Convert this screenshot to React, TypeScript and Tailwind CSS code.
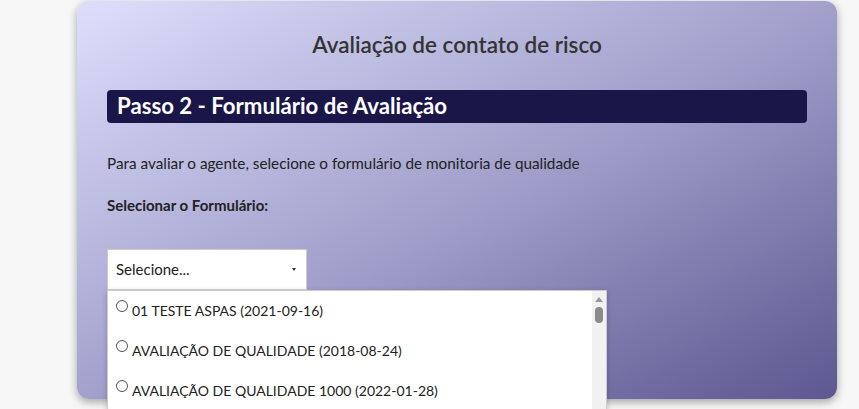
import React from 'react';

const options = [
  '01 TESTE ASPAS (2021-09-16)',
  'AVALIAÇÃO DE QUALIDADE (2018-08-24)',
  'AVALIAÇÃO DE QUALIDADE 1000 (2022-01-28)',
];

const App: React.FC = () => {
  return (
    <div className="h-[409px] overflow-hidden bg-[#f7f7f8] pt-px font-['Lato',sans-serif]">
      <div className="ml-[77px] w-[760px] h-[398px] rounded-[12px] bg-gradient-to-br from-[#dedefc] via-[#a3a1cc] to-[#5d5890] shadow-[0_3px_8px_rgba(0,0,0,0.35)] px-[30px] pt-[30px] relative">
        <h1 className="text-center text-[22.5px] font-semibold text-[#333] leading-[28px]">Avaliação de contato de risco</h1>

        <div className="mt-[31px] h-[33px] rounded-[4px] bg-[#1a1648] px-[10px] flex items-center">
          <h2 className="text-white text-[22.2px] font-bold leading-none">Passo 2 - Formulário de Avaliação</h2>
        </div>

        <p className="mt-[30px] text-[15.3px] text-[#222] leading-[20px]">
          Para avaliar o agente, selecione o formulário de monitoria de qualidade
        </p>
        <p className="mt-[22px] text-[15px] font-bold text-[#222] leading-[20px]">Selecionar o Formulário:</p>

        <div className="relative mt-[34px] w-[200px]">
          <div className="h-[41px] bg-white border border-[#ccc] flex items-center justify-between pl-[8px] pr-[10px] text-[15px] text-[#222]">
            <span>Selecione...</span>
            <span className="w-0 h-0 border-l-[2px] border-r-[2px] border-t-[3px] border-l-transparent border-r-transparent border-t-[#333]" />
          </div>
          <div className="absolute left-0 top-[41px] w-[500px] h-[140px] bg-white border border-[#ccc] shadow-[0_2px_6px_rgba(0,0,0,0.2)] flex">
            <ul className="flex-1 pt-[8px] pl-[8px]">
              {options.map((o) => (
                <li key={o} className="h-[40px] flex items-start gap-[4px] text-[14px] text-[#222] leading-[20px]">
                  <span className="mt-[1px] w-[12px] h-[12px] rounded-full border border-[#555] bg-white shrink-0" />
                  <span className="mt-[2px]">{o}</span>
                </li>
              ))}
            </ul>
            <div className="w-[14px] bg-[#f1f1f1] flex flex-col items-center pt-[6px]">
              <span className="w-0 h-0 border-l-[4px] border-r-[4px] border-b-[5px] border-l-transparent border-r-transparent border-b-[#999]" />
              <span className="mt-[5px] w-[8px] h-[16px] rounded-full bg-[#8a8a8a]" />
            </div>
          </div>
        </div>
      </div>
    </div>
  );
};

export default App;
